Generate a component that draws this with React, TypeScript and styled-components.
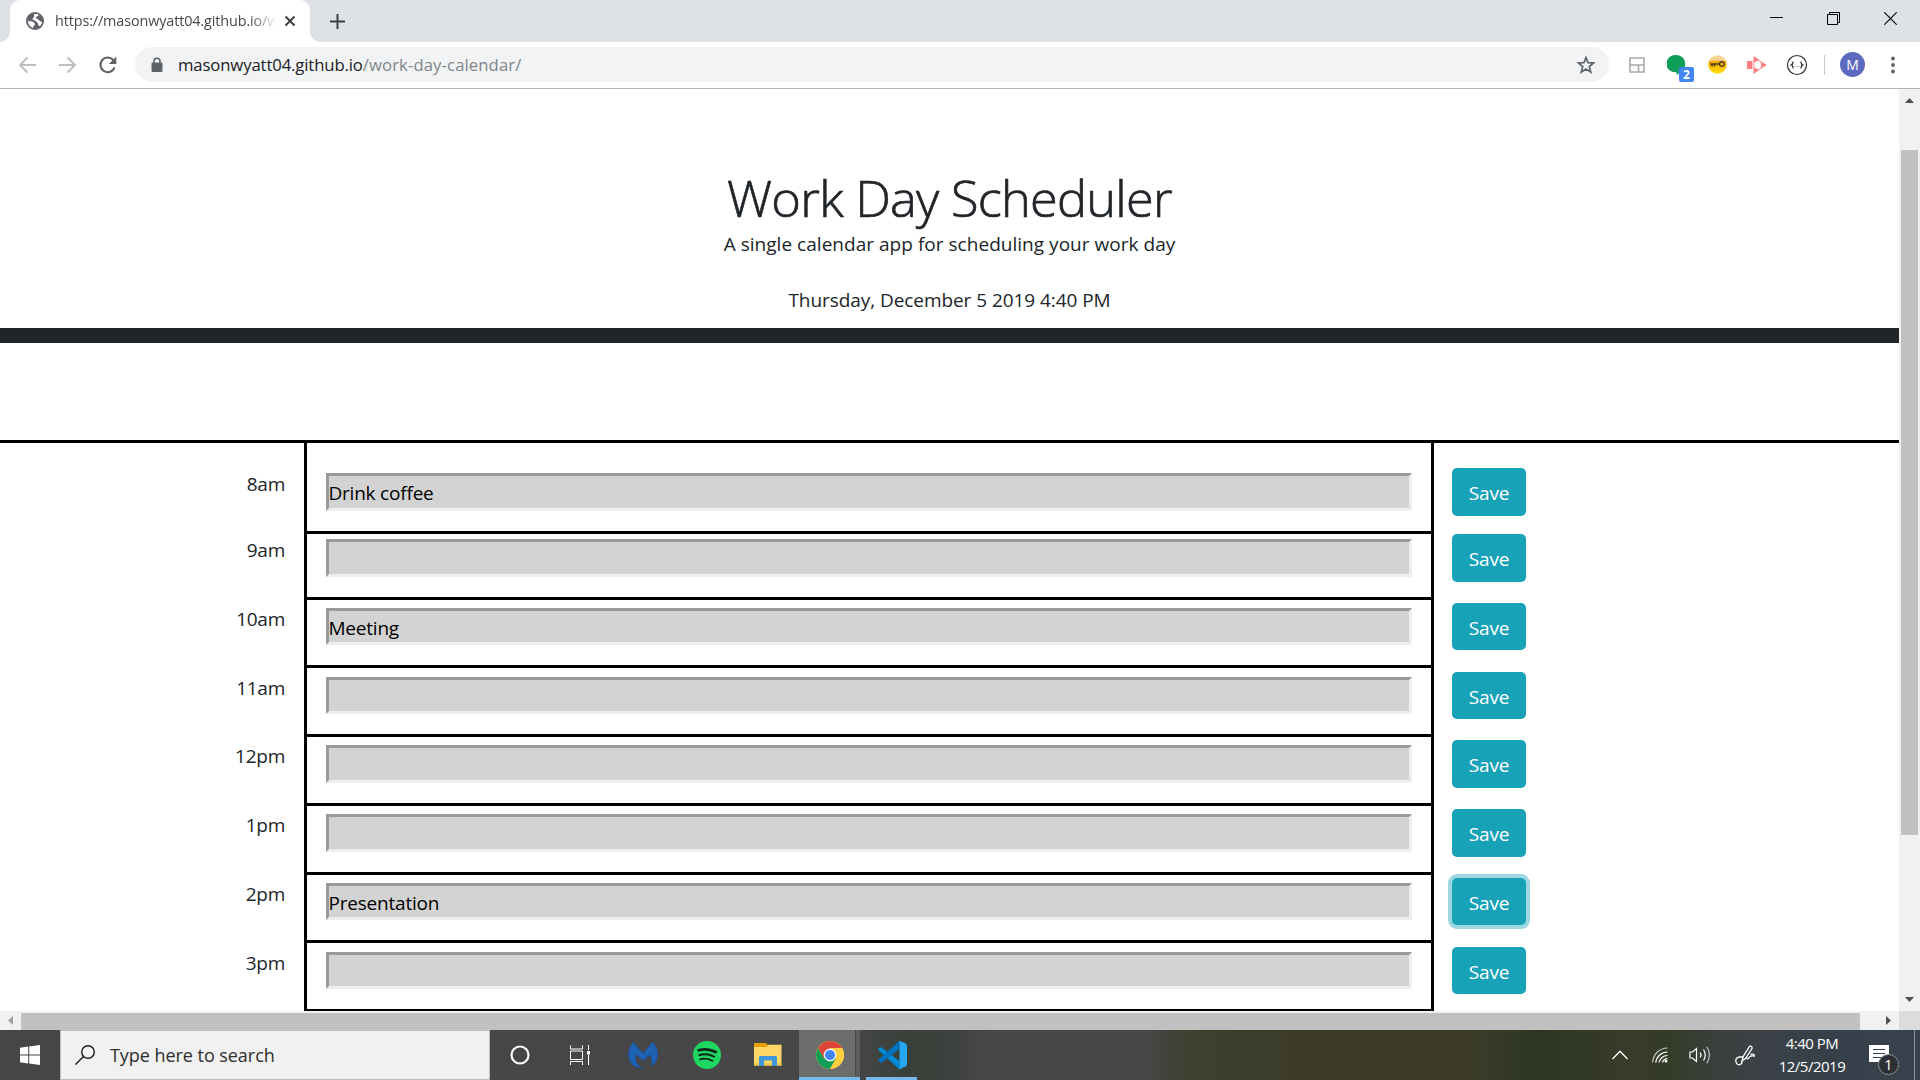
import React from "react";
import styled, { createGlobalStyle } from "styled-components";

const GlobalStyle = createGlobalStyle`
  html, body { margin: 0; padding: 0; overflow: hidden; }
  *, *::before, *::after { box-sizing: border-box; }
  svg { display: block; flex: none; }
`;

const sans = `"Segoe UI", "Open Sans", "Noto Sans", sans-serif`;

const Screen = styled.div`
  width: 1920px;
  height: 1080px;
  display: flex;
  flex-direction: column;
  overflow: hidden;
  background: #fff;
  font-family: ${sans};
  color: #212529;
`;

/* ---------- Browser chrome ---------- */

const TabStrip = styled.div`
  flex: none;
  height: 42px;
  display: flex;
  padding-left: 10px;
  background: #dee1e6;
`;

const Tab = styled.div`
  position: relative;
  width: 300px;
  height: 42px;
  padding-left: 16px;
  display: flex;
  align-items: center;
  background: #fff;
  border-radius: 10px 10px 0 0;
  &::before, &::after {
    content: "";
    position: absolute;
    bottom: 0;
    width: 10px;
    height: 10px;
  }
  &::before {
    left: -10px;
    background: radial-gradient(circle at 0 0, transparent 9.5px, #fff 10px);
  }
  &::after {
    right: -10px;
    background: radial-gradient(circle at 100% 0, transparent 9.5px, #fff 10px);
  }
`;

const TabTitle = styled.span`
  width: 220px;
  margin-left: 11px;
  font-size: 14.4px;
  letter-spacing: -0.12px;
  line-height: 24px;
  white-space: nowrap;
  overflow: hidden;
  color: #45494d;
  mask-image: linear-gradient(90deg, #000 195px, transparent 222px);
`;

const TabClose = styled.span`
  margin-left: 9px;
`;

const NewTab = styled.span`
  display: flex;
  align-items: center;
  margin-left: 20px;
`;

const WindowControls = styled.div`
  margin-left: auto;
  display: flex;
  padding-right: 1px;
`;

const WindowButton = styled.span`
  width: 57px;
  height: 37px;
  display: flex;
  align-items: center;
  justify-content: center;
`;

const Toolbar = styled.div`
  flex: none;
  height: 47px;
  padding: 5px 0 6px;
  display: flex;
  align-items: center;
  border-bottom: 1px solid #b2b4b6;
  background: #fff;
`;

const NavButtons = styled.div`
  width: 135px;
  display: flex;
  padding-left: 17px;
  gap: 20px;
`;

const Omnibox = styled.div`
  width: 1474px;
  height: 35px;
  padding: 0 13px 0 16px;
  display: flex;
  align-items: center;
  background: #f1f3f4;
  border-radius: 18px;
`;

const Url = styled.span`
  margin-left: 15px;
  flex: 1;
  font-size: 16.7px;
  letter-spacing: -0.12px;
  line-height: 26px;
  color: #202124;
`;

const UrlPath = styled.span`
  color: #80868b;
  letter-spacing: 0.1px;
`;

const Extensions = styled.div`
  display: flex;
  padding-left: 8px;
`;

const Extension = styled.span`
  position: relative;
  width: 40px;
  height: 35px;
  display: flex;
  align-items: center;
  justify-content: center;
`;

const ExtensionBadge = styled.span`
  position: absolute;
  left: 22px;
  top: 20px;
  width: 15px;
  height: 15px;
  border-radius: 2px;
  background: #4285f4;
  color: #fff;
  font: 700 12px/16px ${sans};
  text-align: center;
`;

const Divider = styled.span`
  align-self: center;
  width: 1px;
  height: 20px;
  margin-left: 7px;
  background: #c6c8ca;
`;

const Avatar = styled.span`
  align-self: center;
  width: 25px;
  height: 25px;
  margin: 0 25.5px 0 15px;
  border-radius: 50%;
  background: #5c6bc0;
  color: #fff;
  font-size: 14px;
  line-height: 25px;
  text-align: center;
`;

/* ---------- Page ---------- */

const Viewport = styled.div`
  flex: none;
  height: 941px;
  display: grid;
  grid-template: 922px 19px / 1899px 21px;
`;

const Page = styled.main`
  overflow: hidden;
`;

const Header = styled.header`
  height: 254px;
  padding-top: 79px;
  border-bottom: 15px solid #212529;
  text-align: center;
`;

const Title = styled.h1`
  margin: 0;
  font-size: 50.5px;
  font-weight: 300;
  letter-spacing: -0.75px;
  line-height: 60px;
  -webkit-text-stroke: 0.7px #212529;
`;

const Lead = styled.p`
  margin: 1px 0 26px;
  font-size: 19px;
  letter-spacing: 0.03px;
  line-height: 30px;
`;

const Today = styled.p`
  margin: 0;
  font-size: 19px;
  letter-spacing: -0.06px;
  line-height: 30px;
`;

const Schedule = styled.section`
  margin-top: 97px;
  border-top: 3px solid #000;
`;

const HourRow = styled.div<{ $height: number }>`
  display: grid;
  grid-template-columns: 304px 1130px 1fr;
  height: ${(p) => p.$height}px;
`;

const Hour = styled.div<{ $pad: number }>`
  padding: ${(p) => p.$pad + 1}px 19px 0 0;
  font-size: 19px;
  letter-spacing: -0.25px;
  line-height: 30px;
  text-align: right;
`;

const Slot = styled.div<{ $pad: number }>`
  padding: ${(p) => p.$pad + 5}px 19px 0;
  border: solid #000;
  border-width: 0 3px 3px;
`;

const Entry = styled.input<{ $height: number }>`
  display: block;
  width: 100%;
  height: ${(p) => p.$height}px;
  padding: ${(p) => (p.$height === 37 ? 2 : 1)}px 0 0;
  border: 3px solid;
  border-color: #9a9a9a #eee #eee #9a9a9a;
  border-radius: 0;
  outline: 0;
  background: #d3d3d3;
  color: #000;
  font: 19px ${sans};
  letter-spacing: -0.2px;
  text-indent: -0.6px;
`;

const Action = styled.div<{ $pad: number }>`
  padding: ${(p) => p.$pad}px 0 0 18px;
`;

const SaveButton = styled.button<{ $height: number; $focused?: boolean }>`
  display: block;
  width: 74px;
  height: ${(p) => p.$height}px;
  padding: ${(p) => (p.$height === 47 ? 2 : 1)}px 0 0;
  border: 0;
  border-radius: 5px;
  background: #17a2b8;
  box-shadow: ${(p) => (p.$focused ? "0 0 0 4px #9dd8e2" : "none")};
  color: #fff;
  font: 19px ${sans};
  letter-spacing: -0.1px;
`;

const VScroll = styled.div`
  display: flex;
  flex-direction: column;
  align-items: center;
  justify-content: space-between;
  padding: 9px 0;
  background: #f1f1f1;
`;

const VThumb = styled.div`
  width: 17px;
  height: 685px;
  margin: 47px 0 auto;
  background: #c1c1c1;
`;

const HScroll = styled.div`
  display: flex;
  align-items: center;
  padding: 0 8px;
  background: #f1f1f1;
`;

const HThumb = styled.div`
  align-self: flex-end;
  width: 1839px;
  height: 17px;
  margin: 0 auto 0 8px;
  background: #c1c1c1;
`;

const Corner = styled.div`
  background: #dcdcdc;
`;

/* ---------- Taskbar ---------- */

const Taskbar = styled.footer`
  flex: none;
  height: 50px;
  display: flex;
  color: #fff;
  background: linear-gradient(90deg, #464646 0, #474747 850px, #39403a 905px, #3b413c 945px, #464645 975px,
    #48484a 1040px, #464746 1150px, #3d4030 1190px, #3c3c29 1290px, #3d3b28 1380px, #3c3c29 1470px, #2d3624 1535px,
    #323826 1590px, #3a3a2a 1620px, #343c29 1670px, #3a3f3c 1715px, #3b4146 1760px, #36404a 1830px, #37424e 1920px);
`;

const StartButton = styled.div`
  width: 60px;
  display: flex;
  align-items: center;
  justify-content: center;
`;

const SearchBox = styled.div`
  width: 430px;
  display: flex;
  align-items: center;
  padding-left: 14px;
  background: #f1f1f1;
  border: 1px solid #bdbdbd;
  color: #2e2e2e;
  font-size: 18px;
  letter-spacing: -0.05px;
`;

const SearchText = styled.span`
  margin-left: 15px;
`;

const TaskItem = styled.div<{ $width: number; $active?: boolean }>`
  width: ${(p) => p.$width}px;
  display: flex;
  align-items: center;
  justify-content: center;
  background: ${(p) => (p.$active ? "linear-gradient(90deg, #6b6c6c 56px, #484949 56px, #484949 57px, #5c5d5d 57px)" : "none")};
`;

const AppItem = styled(TaskItem)<{ $line?: number }>`
  flex-direction: column;
  &::after {
    content: "";
    width: ${(p) => p.$line ?? 0}px;
    height: 3px;
    margin-top: auto;
    background: #76b9ed;
  }
  &::before {
    content: "";
    margin-bottom: auto;
    height: 3px;
  }
`;

const Tray = styled.div`
  margin-left: auto;
  display: flex;
  align-items: center;
`;

const TrayIcon = styled.span<{ $width: number }>`
  width: ${(p) => p.$width}px;
  display: flex;
  justify-content: center;
`;

const Clock = styled.div`
  width: 96px;
  padding-bottom: 1px;
  font-size: 15px;
  letter-spacing: -0.5px;
  line-height: 23px;
  text-align: center;
`;

const Notifications = styled.div`
  position: relative;
  width: 55px;
  height: 50px;
  padding: 15px 0 0 9px;
  border-right: 1px solid #8b9298;
`;

const NoticeCount = styled.span`
  position: absolute;
  left: 18px;
  top: 24px;
  width: 21px;
  height: 21px;
  border: 1px solid #8d9093;
  border-radius: 50%;
  background: #2b2f33;
  font-size: 14.5px;
  line-height: 19px;
  text-align: center;
`;

const TrayEnd = styled.span`
  width: 5px;
`;

type Row = { hour: string; text: string; row: number; pad: number; input: number; button: number; focused?: boolean };

const rows: Row[] = [
  { hour: "8am", text: "Drink coffee", row: 91, pad: 25, input: 38, button: 48 },
  { hour: "9am", text: "", row: 66, pad: 0, input: 38, button: 48 },
  { hour: "10am", text: "Meeting", row: 68, pad: 3, input: 37, button: 47 },
  { hour: "11am", text: "", row: 69, pad: 4, input: 37, button: 47 },
  { hour: "12pm", text: "", row: 69, pad: 3, input: 38, button: 48 },
  { hour: "1pm", text: "", row: 69, pad: 3, input: 38, button: 48 },
  { hour: "2pm", text: "Presentation", row: 68, pad: 3, input: 37, button: 47, focused: true },
  { hour: "3pm", text: "", row: 69, pad: 4, input: 37, button: 47 },
];

const Triangle = ({ w, h, d, fill = "#505050" }: { w: number; h: number; d: string; fill?: string }) => (
  <svg width={w} height={h} viewBox={`0 0 ${w} ${h}`}><path d={d} fill={fill} /></svg>
);

export default function App() {
  return (
    <Screen>
      <GlobalStyle />
      <TabStrip>
        <Tab>
          <svg width="18" height="18" viewBox="0 0 18 18">
            <circle cx="9" cy="9" r="9" fill="#5f6368" />
            <path d="M2 8.6C3 9.8 5 9 6.500 9.700C8 10.300 9 11 8.700 12.500C8.500 14 7 14 7 15.900A7.200 7.200 0 0 1 2 8.600ZM8 2C10 1.700 12 2 12.800 2.800C12.600 4.500 10.600 4 9.900 5.200C9.600 6.300 11.200 6.500 12.300 7.400C13.500 8.300 14.400 9.800 16.100 9.800C16 11.500 15 13.400 13.800 14.300C13.400 13.200 12 13.100 11.900 11.900C11.900 10.200 10 10 9 8.600C8.200 8 7 8.300 6.500 7.300C6.300 5.800 8.300 5.600 8.200 4.200Z" fill="#fff" />
          </svg>
          <TabTitle>https://masonwyatt04.github.io/w</TabTitle>
          <TabClose>
            <svg width="12" height="12" viewBox="0 0 12 12"><path d="M1.500 1.500L10.500 10.500M10.500 1.500L1.500 10.500" stroke="#3c4043" strokeWidth="2" /></svg>
          </TabClose>
        </Tab>
        <NewTab>
          <svg width="15" height="15" viewBox="0 0 15 15"><path d="M7.500 0V15M0 7.500H15" stroke="#3c4043" strokeWidth="2" /></svg>
        </NewTab>
        <WindowControls>
          <WindowButton>
            <svg width="13" height="13" viewBox="0 0 13 13"><path d="M0 5.500H13" stroke="#000" /></svg>
          </WindowButton>
          <WindowButton>
            <svg width="13" height="13" viewBox="0 0 13 13" fill="none" stroke="#000"><path d="M.5 2.500H10.500V12.500H.5ZM2.500 2.500V.5H12.500V10.500H10.500" /></svg>
          </WindowButton>
          <WindowButton>
            <svg width="13" height="13" viewBox="0 0 13 13"><path d="M.3 .3L12.700 12.700M12.700 .3L.3 12.700" stroke="#000" strokeWidth="1.100" /></svg>
          </WindowButton>
        </WindowControls>
      </TabStrip>

      <Toolbar>
        <NavButtons>
          <svg width="20" height="20" viewBox="0 0 20 20" fill="none" stroke="#bcbec1" strokeWidth="1.900"><path d="M19 10H3.500M10.500 2.500L3 10L10.500 17.500" /></svg>
          <svg width="20" height="20" viewBox="0 0 20 20" fill="none" stroke="#bcbec1" strokeWidth="1.900"><path d="M2 10H17.500M10.500 2.500L18 10L10.500 17.500" /></svg>
          <svg width="21" height="20" viewBox="-1 0 21 20"><path d="M16.600 12.400A7.300 7.300 0 1 1 15.200 5L17 6.700" fill="none" stroke="#5f6368" strokeWidth="2.100" /><path d="M18.300 1.500V9H10.800Z" fill="#5f6368" /></svg>
        </NavButtons>
        <Omnibox>
          <svg width="12" height="16" viewBox="0 0 12 16"><path d="M3 6V4.200A3 3 0 0 1 9 4.200V6" fill="none" stroke="#5f6368" strokeWidth="1.500" /><rect x=".5" y="5.600" width="11" height="9.400" rx="1.300" fill="#5f6368" /></svg>
          <Url>masonwyatt04.github.io<UrlPath>/work-day-calendar/</UrlPath></Url>
          <svg width="20" height="20" viewBox="0 0 20 20"><path d="M10 2.500L12 7.600L17.600 8L13.300 11.600L14.700 17.100L10 14.100L5.300 17.100L6.700 11.600L2.400 8L8 7.600Z" fill="none" stroke="#5f6368" strokeWidth="1.700" /></svg>
        </Omnibox>
        <Extensions>
          <Extension>
            <svg width="16" height="16" viewBox="0 0 16 16" fill="none" stroke="#a9a9a9" strokeWidth="1.600"><path d="M1 1H15V15H1ZM1 8H15M9.500 8V15" /></svg>
          </Extension>
          <Extension>
            <svg width="20" height="22" viewBox="0 0 20 22"><path d="M9.500 1A8.700 8.700 0 1 0 9.500 18.200V21C14 18.800 18.300 14.300 18.300 9.700A8.700 8.700 0 0 0 9.500 1Z" fill="#109d58" /></svg>
            <ExtensionBadge>2</ExtensionBadge>
          </Extension>
          <Extension>
            <svg width="19" height="19" viewBox="0 0 19 19">
              <defs><linearGradient id="keyGold" x1="0" y1="0" x2="0" y2="1"><stop offset="0" stopColor="#fbd9a0" /><stop offset=".28" stopColor="#f8ce83" /><stop offset=".32" stopColor="#f5a800" /><stop offset=".7" stopColor="#fdc500" /><stop offset="1" stopColor="#ffe30a" /></linearGradient></defs>
              <circle cx="9.500" cy="9.500" r="9.300" fill="url(#keyGold)" />
              <path d="M2.200 9H11.500M4 9.500V11.500M6.500 9.500V11.500" stroke="#4a3f22" strokeWidth="1.600" /><circle cx="13.800" cy="9" r="2.300" fill="none" stroke="#4a3f22" strokeWidth="1.400" />
            </svg>
          </Extension>
          <Extension>
            <svg width="20" height="18" viewBox="0 0 20 18" fill="#ff7e7e"><path d="M0 5H5.500V13H0ZM6.500 0L12.500 4L6.500 6.500ZM14 5.500L20 9L14 12.500ZM6.500 11.500L12.500 14L6.500 18Z" /><path d="M7 6V12M12 4.500L14.500 6.500M12 13.500L14.500 11.500" fill="none" stroke="#ff9a9a" strokeWidth="1.100" /></svg>
          </Extension>
          <Extension>
            <svg width="22" height="22" viewBox="0 0 22 22" fill="none" stroke="#333"><circle cx="11" cy="11" r="9.500" strokeWidth="1.200" /><path d="M7.500 8C6.200 8 7 10.600 5.700 11C7 11.400 6.200 14 7.500 14M14.500 8C15.800 8 15 10.600 16.300 11C15 11.400 15.800 14 14.500 14" strokeWidth="1.400" /><path d="M8.500 12.500H9.500M10.500 12.500H11.500M12.500 12.500H13.500" stroke="#999" /></svg>
          </Extension>
        </Extensions>
        <Divider />
        <Avatar>M</Avatar>
        <svg width="4" height="18" viewBox="0 0 4 18" fill="#5f6368"><circle cx="2" cy="2.500" r="1.900" /><circle cx="2" cy="9" r="1.900" /><circle cx="2" cy="15.500" r="1.900" /></svg>
      </Toolbar>

      <Viewport>
        <Page>
          <Header>
            <Title>Work Day Scheduler</Title>
            <Lead>A single calendar app for scheduling your work day</Lead>
            <Today>Thursday, December 5 2019 4:40 PM</Today>
          </Header>
          <Schedule>
            {rows.map((r) => (
              <HourRow key={r.hour} $height={r.row}>
                <Hour $pad={r.pad}>{r.hour}</Hour>
                <Slot $pad={r.pad}><Entry $height={r.input} defaultValue={r.text} /></Slot>
                <Action $pad={r.pad}><SaveButton $height={r.button} $focused={r.focused}>Save</SaveButton></Action>
              </HourRow>
            ))}
          </Schedule>
        </Page>
        <VScroll>
          <Triangle w={9} h={5} d="M0 5L4.500 0L9 5Z" />
          <VThumb />
          <Triangle w={9} h={5} d="M0 0L4.500 5L9 0Z" />
        </VScroll>
        <HScroll>
          <Triangle w={5} h={9} d="M5 0L0 4.500L5 9Z" fill="#a3a3a3" />
          <HThumb />
          <Triangle w={5} h={9} d="M0 0L5 4.500L0 9Z" />
        </HScroll>
        <Corner />
      </Viewport>

      <Taskbar>
        <StartButton>
          <svg width="20" height="20" viewBox="0 0 20 20" fill="#fff"><path d="M0 2.800L8.200 1.600V9.500H0ZM9.200 1.450L20 0V9.500H9.200ZM0 10.500H8.200V18.400L0 17.200ZM9.200 10.500H20V20L9.200 18.550Z" /></svg>
        </StartButton>
        <SearchBox>
          <svg width="20" height="20" viewBox="0 0 20 20" fill="none" stroke="#1b1b1b" strokeWidth="1.400"><circle cx="13" cy="7" r="6.300" /><path d="M8.500 11.500L.4 19.600" /></svg>
          <SearchText>Type here to search</SearchText>
        </SearchBox>
        <TaskItem $width={60}>
          <svg width="20" height="20" viewBox="0 0 20 20"><circle cx="10" cy="10" r="8.500" fill="none" stroke="#fff" strokeWidth="2.200" /></svg>
        </TaskItem>
        <TaskItem $width={60}>
          <svg width="22" height="20" viewBox="0 0 22 20" fill="none" stroke="#fff"><path d="M1.500 .5V4H13.500V.5M1.500 6H13.500V14.500H1.500ZM1.500 20V16.500H13.500V20M19.500 0V5M19.500 10V20" /><path d="M18 6H21V9.500H18Z" fill="#fff" stroke="none" /></svg>
        </TaskItem>
        <AppItem $width={66}>
          <svg width="30" height="28" viewBox="0 0 30 28"><path d="M5.500 1L15 12.500L24.500 1C28 4.500 30 9 29.700 14C29.500 18.500 27.500 22 24 25.500L22.500 13.500L15.500 19.500L8 14C6.500 19 9 25 15 27C6 27.500 .5 21 .3 14C.2 9 2 4.500 5.500 1Z" fill="#1e62b4" stroke="#27498a" strokeWidth=".8" /></svg>
        </AppItem>
        <AppItem $width={61}>
          <svg width="28" height="28" viewBox="0 0 28 28" fill="none" stroke="#10261a" strokeLinecap="round"><circle cx="14" cy="14" r="14" fill="#1ed760" stroke="none" /><path d="M5.600 9.300C11 7.700 17.500 8.200 22.700 11" strokeWidth="2.700" /><path d="M6.400 14C11.500 12.600 16.500 13.200 21 15.600" strokeWidth="2.200" /><path d="M7 18.300C11 17.200 15.500 17.600 19.400 19.800" strokeWidth="1.800" /></svg>
        </AppItem>
        <AppItem $width={62}>
          <svg width="28" height="26" viewBox="0 0 28 26"><path d="M0 1H12L14 3V8H0Z" fill="#e3a000" /><path d="M0 5H12.500L14.500 2.800H27.500V23.500H0Z" fill="#ffd668" /><path d="M0 21.500H27.500V23.500H0Z" fill="#f5c64f" /><path d="M5 24V15.500Q5 14 6.500 14H21.500Q23 14 23 15.500V24H18V18.500H10V24Z" fill="#3f97d7" /></svg>
        </AppItem>
        <AppItem $width={61} $active $line={61}>
          <svg width="28" height="28" viewBox="0 0 28 28"><circle cx="14" cy="14" r="14" fill="#ffcd40" /><path d="M14 14L8 17.500L1.900 7A14 14 0 0 1 26.100 7H14Z" fill="#db4437" /><path d="M14 14L20 17.500L14 28A14 14 0 0 1 1.900 7L8 17.500Z" fill="#0f9d58" /><path d="M14 7H26.100A14 14 0 0 1 14 28L20 17.500Z" fill="#ffcd40" /><circle cx="14" cy="14" r="6.400" fill="#f1f1f1" /><circle cx="14" cy="14" r="5" fill="#4285f4" /></svg>
        </AppItem>
        <AppItem $width={63} $line={51}>
          <svg width="30" height="30" viewBox="0 0 30 30"><path d="M.6 9.500L3 7.500Q4 7 5 7.700L22.500 21V29.500Z" fill="#0089d6" /><path d="M.6 20.500L3 22.500Q4 23 5 22.300L22.500 9V.5L.6 20.500Z" fill="#0072bd" /><path d="M21.500 .4L28.700 3.600Q30 4.300 30 5.700V24.300Q30 25.700 28.700 26.400L21.500 29.700Q22.500 29 22.500 27.500V2.500Q22.500 1 21.500 .4Z" fill="#24a8f2" /></svg>
        </AppItem>
        <Tray>
          <TrayIcon $width={52}><svg width="16" height="10" viewBox="0 0 16 10"><path d="M.5 9L8 1.300L15.500 9" fill="none" stroke="#fff" strokeWidth="1.300" /></svg></TrayIcon>
          <TrayIcon $width={28}><svg width="16" height="16" viewBox="0 0 16 16" fill="none" stroke="#fff"><path d="M.7 15.500A15 15 0 0 1 15.500 1" stroke="#c3c7c3" strokeWidth="1.200" /><path d="M3.800 15.500A11.700 11.700 0 0 1 15.500 5M7 15.500A8.500 8.500 0 0 1 15.500 8.500M10.500 15.500A5.200 5.200 0 0 1 15.500 11.500" strokeWidth="1.200" /><circle cx="14" cy="14" r="1.500" fill="#fff" stroke="none" /></svg></TrayIcon>
          <TrayIcon $width={52}><svg width="22" height="20" viewBox="0 0 22 20" fill="none" stroke="#fff" strokeWidth="1.200"><path d="M1 7H3.500L7.500 3.500V16.500L3.500 13H1ZM11 7.500Q13 10 11 12.500M14.500 4.500Q18 10 14.500 15.500" /><path d="M17.800 1.800Q23 10 17.800 18.200" stroke="#c0c5c5" /></svg></TrayIcon>
          <TrayIcon $width={38}><svg width="20" height="21" viewBox="0 0 20 21" fill="none" stroke="#fff" strokeWidth="1.300"><path d="M7 16L8.200 11.500L14.500 1.500Q16 .3 17 2L17 3.500L10.500 13.500ZM8.500 12H4.500Q.7 12.500 .8 16Q1.500 20 4.500 19.800Q7.500 19 7 16M11.500 12.500Q12.500 15.500 14.500 12Q16 10.500 19.300 11Q19.500 8.500 15.500 9.500" /></svg></TrayIcon>
          <Clock>4:40 PM<br />12/5/2019</Clock>
          <Notifications>
            <svg width="20" height="23" viewBox="0 0 20 23"><path d="M0 0H20V17H14L10 22V17H0Z" fill="#fff" /><path d="M4 4.500H16M4 8.500H16M4 12.500H16" stroke="#38424c" strokeWidth="1.200" /></svg>
            <NoticeCount>1</NoticeCount>
          </Notifications>
          <TrayEnd />
        </Tray>
      </Taskbar>
    </Screen>
  );
}
